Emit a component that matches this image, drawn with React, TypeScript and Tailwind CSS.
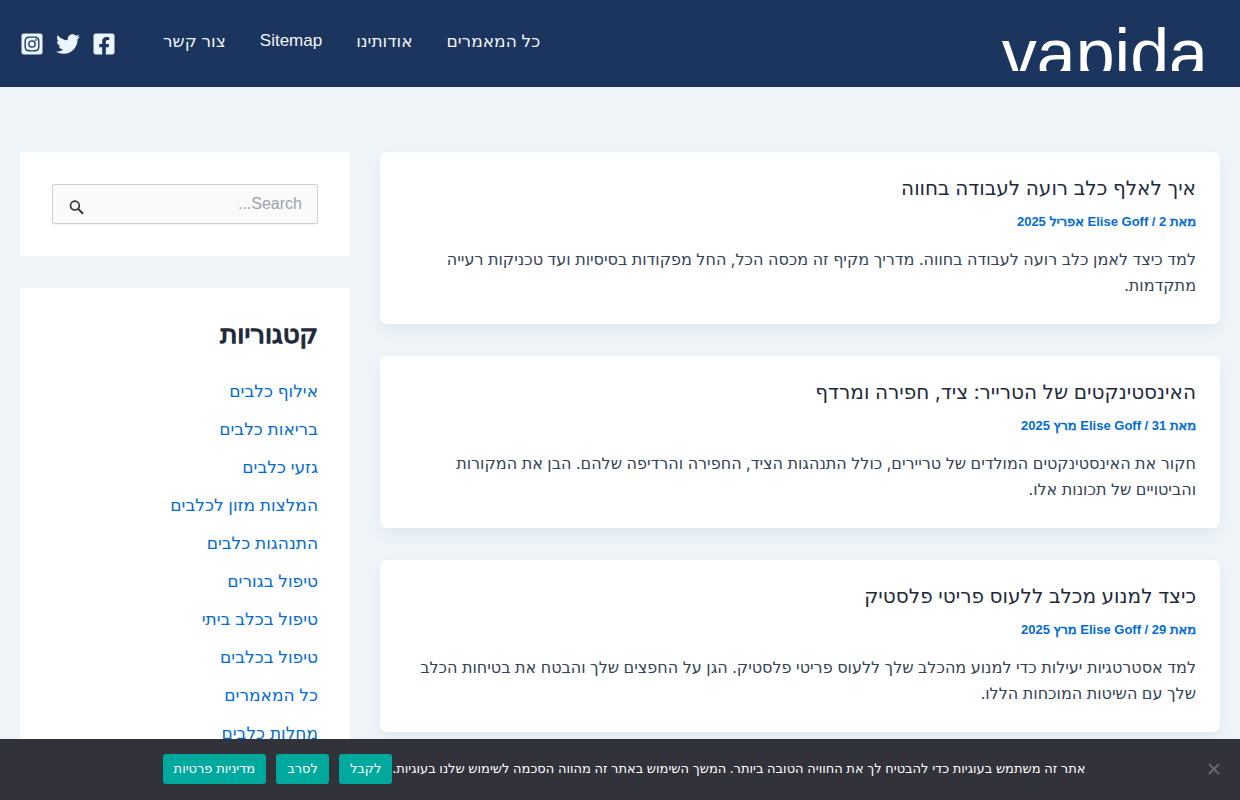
import { FaFacebookSquare, FaInstagramSquare, FaTwitter } from "react-icons/fa";

const latin = "font-['Liberation_Sans',Arial,sans-serif]";

const navItems = [
  { text: "כל המאמרים" },
  { text: "אודותינו" },
  { text: "Sitemap", className: latin },
  { text: "צור קשר" },
];

const socials = [
  { label: "Facebook", Icon: FaFacebookSquare },
  { label: "Twitter", Icon: FaTwitter },
  { label: "Instagram", Icon: FaInstagramSquare },
];

const posts = [
  {
    title: "איך לאלף כלב רועה לעבודה בחווה",
    day: 2,
    month: "אפריל",
    text: "למד כיצד לאמן כלב רועה לעבודה בחווה. מדריך מקיף זה מכסה הכל, החל מפקודות בסיסיות ועד טכניקות רעייה מתקדמות.",
  },
  {
    title: "האינסטינקטים של הטרייר: ציד, חפירה ומרדף",
    day: 31,
    month: "מרץ",
    text: "חקור את האינסטינקטים המולדים של טריירים, כולל התנהגות הציד, החפירה והרדיפה שלהם. הבן את המקורות והביטויים של תכונות אלו.",
  },
  {
    title: "כיצד למנוע מכלב ללעוס פריטי פלסטיק",
    day: 29,
    month: "מרץ",
    text: "למד אסטרטגיות יעילות כדי למנוע מהכלב שלך ללעוס פריטי פלסטיק. הגן על החפצים שלך והבטח את בטיחות הכלב שלך עם השיטות המוכחות הללו.",
  },
];

const categories = [
  "אילוף כלבים",
  "בריאות כלבים",
  "גזעי כלבים",
  "המלצות מזון לכלבים",
  "התנהגות כלבים",
  "טיפול בגורים",
  "טיפול בכלב ביתי",
  "טיפול בכלבים",
  "כל המאמרים",
  "מחלות כלבים",
];

function Header() {
  return (
    <header className="flex h-[87px] items-center justify-between bg-[#1c355e] px-5">
      <a
        href="#"
        className="ms-3 h-[55px] overflow-hidden font-['Liberation_Sans',Arial,sans-serif] text-[70px] leading-[76px] text-white"
      >
        vapida
      </a>
      <div className="flex items-center gap-[47px]">
        <nav className="flex gap-[34px] pb-1.5 text-[17px] leading-7 text-[#eff4f9]">
          {navItems.map(({ text, className }) => (
            <a key={text} href="#" className={className}>
              {text}
            </a>
          ))}
        </nav>
        <div className="flex gap-3 text-[#ebf5ff]">
          {socials.map(({ label, Icon }) => (
            <a key={label} href="#" aria-label={label}>
              <Icon className="size-6" />
            </a>
          ))}
        </div>
      </div>
    </header>
  );
}

function HebrewBold({ children }: { children: string }) {
  return (
    <span className="font-['DejaVu_Sans',sans-serif] font-normal [-webkit-text-stroke:0.05em_currentColor]">
      {children}
    </span>
  );
}

function Post({ title, day, month, text }: (typeof posts)[number]) {
  return (
    <article className="rounded-md bg-white px-6 pt-6 pb-[26px] shadow-[0_6px_15px_-2px_rgba(16,60,120,0.08)]">
      <h2 className="text-xl leading-6 text-[#1e293b]">
        <a href="#">{title}</a>
      </h2>
      <p className="mt-3 mb-3.5 font-['Liberation_Sans',Arial,sans-serif] text-[13px] leading-5 font-bold text-[#046bd2]">
        <HebrewBold>מאת</HebrewBold> Elise Goff / {day} <HebrewBold>{month}</HebrewBold> 2025
      </p>
      <p className="text-base leading-[26px] text-[#334155]">{text}</p>
    </article>
  );
}

function Sidebar() {
  return (
    <aside className="flex w-[330px] shrink-0 flex-col gap-8">
      <form className="bg-white p-8" role="search">
        <div className="relative">
          <input
            type="search"
            aria-label="Search"
            placeholder="Search..."
            className="h-10 w-full rounded-xs border border-[#ced0d6] bg-[#fafafa] px-[15px] font-['Liberation_Sans',Arial,sans-serif] text-base shadow-xs placeholder:text-[#9ca3af]"
          />
          <button
            type="button"
            aria-label="Search"
            className="absolute top-0 left-0 flex h-11 w-12 items-center justify-center pt-0.5 text-[#333]"
          >
            <svg viewBox="0 0 15 15" className="size-[15px]" fill="none" stroke="currentColor">
              <circle cx="5.9" cy="5.6" r="4.4" strokeWidth="1.7" />
              <path d="M9.2 8.9L14 13.7" strokeWidth="2" />
            </svg>
          </button>
        </div>
      </form>
      <section className="bg-white px-8 pt-[30px] pb-8">
        <h2 className="text-[26px] leading-8 text-[#1e293b]">
          <HebrewBold>קטגוריות</HebrewBold>
        </h2>
        <ul className="mt-[27px] flex flex-col gap-2.5 text-[17px] leading-7 text-[#046bd2]">
          {categories.map((name) => (
            <li key={name}>
              <a href="#">{name}</a>
            </li>
          ))}
        </ul>
      </section>
    </aside>
  );
}

function CookieBar() {
  const button = "h-[30px] rounded-[3px] bg-[#00a99d] px-[11px] text-[13px] text-white";
  return (
    <div className="fixed inset-x-0 bottom-0 flex h-[61px] items-center justify-center bg-[#32323a] pb-px pl-2 text-[13px] text-white">
      <span>
        אתר זה משתמש בעוגיות כדי להבטיח לך את החוויה הטובה ביותר. המשך השימוש באתר זה מהווה הסכמה לשימוש שלנו בעוגיות.
      </span>
      <div className="flex gap-2.5">
        <button className={button}>לקבל</button>
        <button className={button}>לסרב</button>
        <button className={button}>מדיניות פרטיות</button>
      </div>
      <button aria-label="סגור" className="absolute right-5 text-[#68686e]">
        <svg viewBox="0 0 12 12" className="size-3" stroke="currentColor" strokeWidth="1.8">
          <path d="M1 1L11 11M11 1L1 11" />
        </svg>
      </button>
    </div>
  );
}

export default function App() {
  return (
    <div
      dir="rtl"
      className="min-h-screen bg-[#eff4f9] font-['Inter','DejaVu_Sans',sans-serif]"
    >
      <Header />
      <div className="flex items-start gap-[30px] px-5 pt-[65px]">
        <main className="flex min-w-0 flex-1 flex-col gap-8">
          {posts.map((post) => (
            <Post key={post.title} {...post} />
          ))}
        </main>
        <Sidebar />
      </div>
      <CookieBar />
    </div>
  );
}
